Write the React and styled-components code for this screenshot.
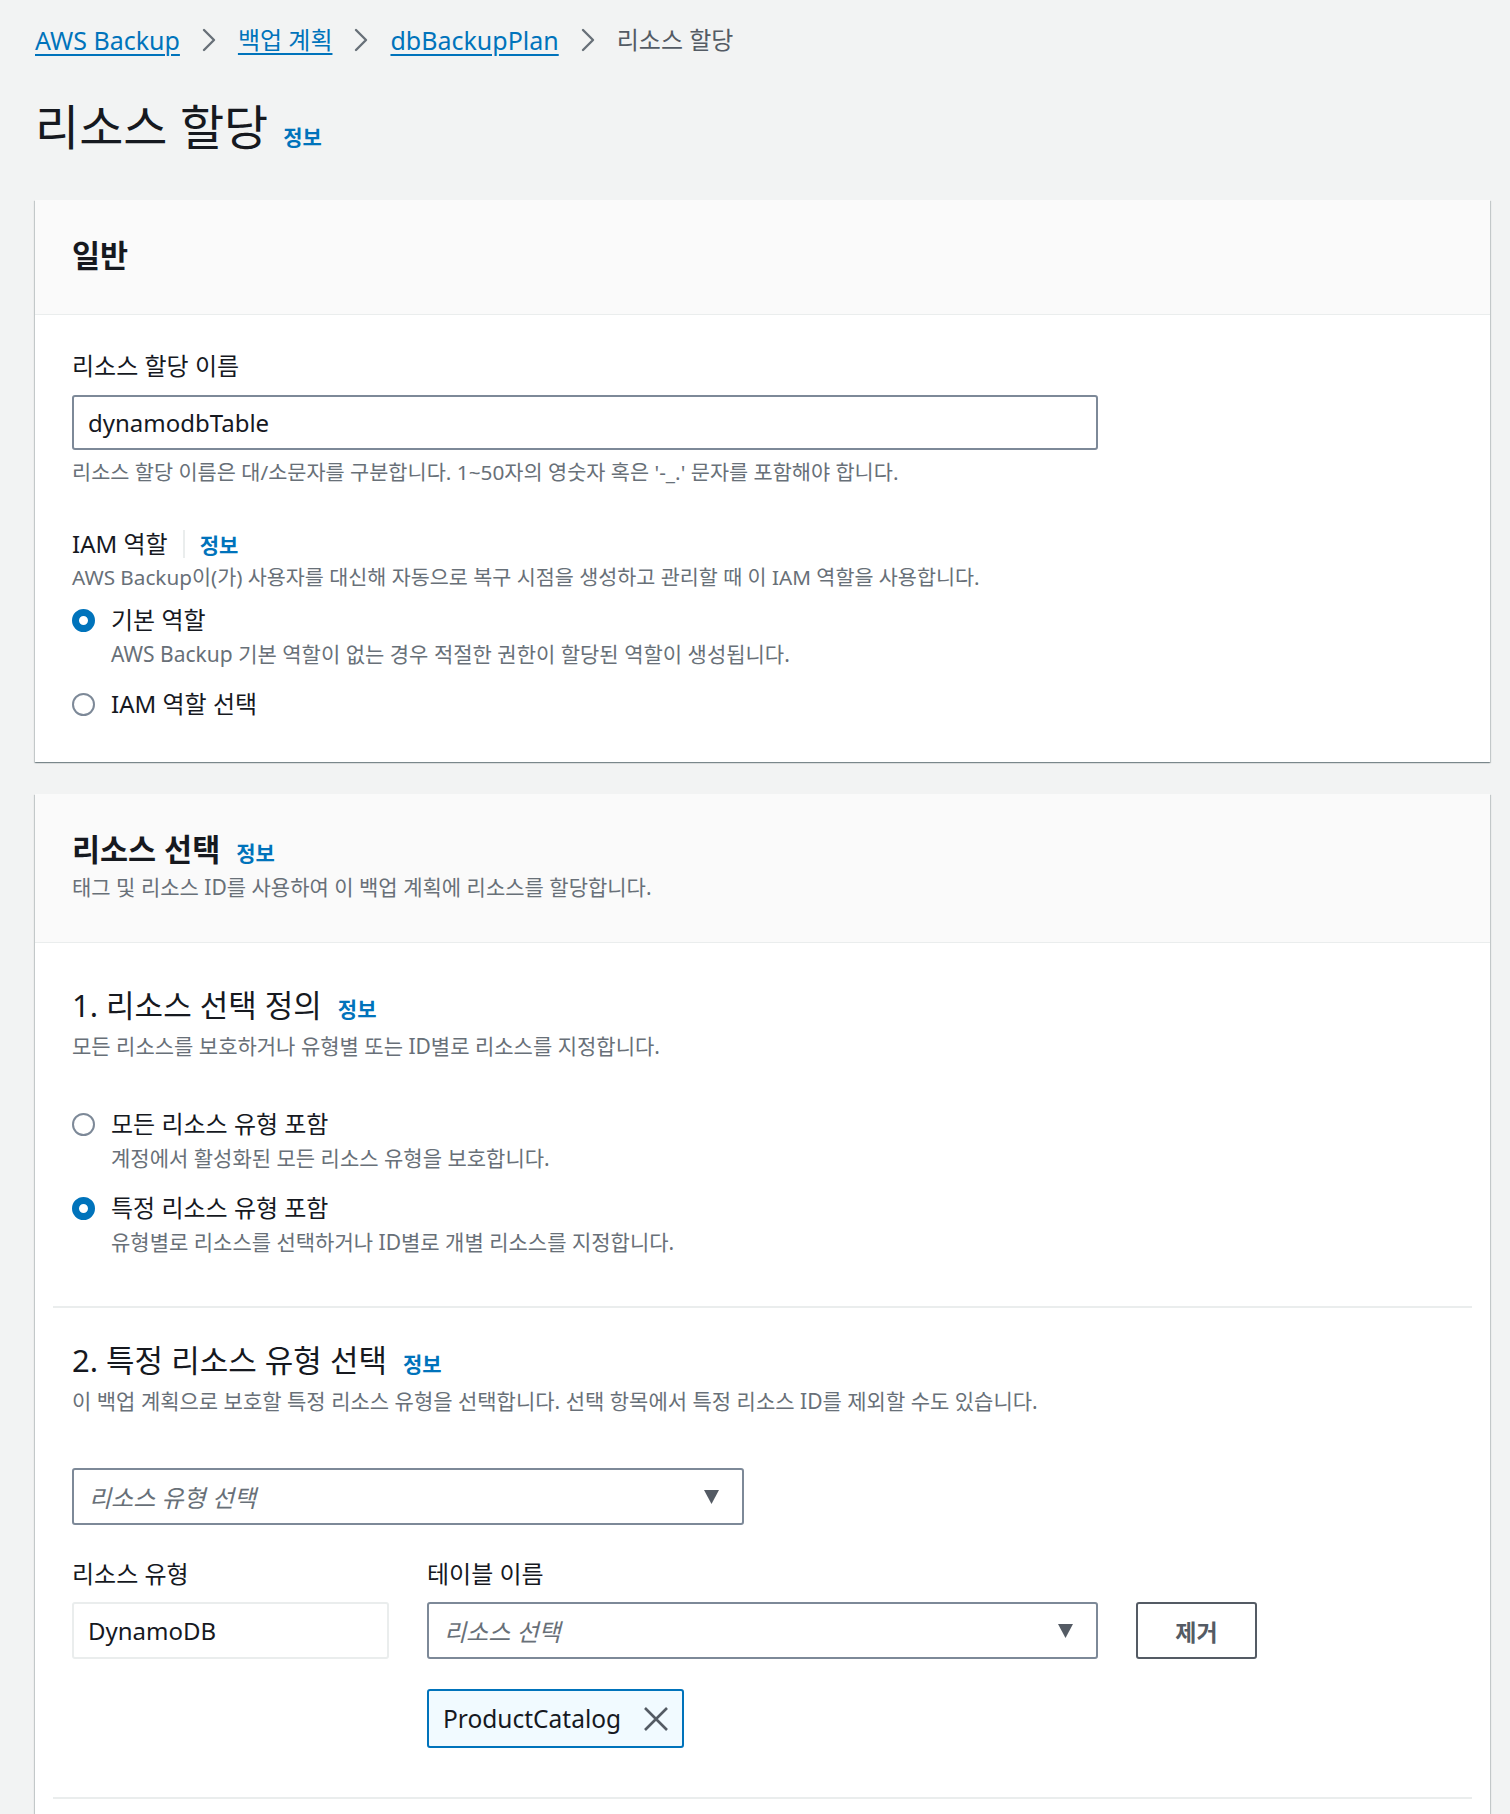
import React from "react";
import styled, { createGlobalStyle } from "styled-components";

const GlobalStyle = createGlobalStyle`
  body {
    margin: 0;
    background: #f2f3f3;
    font-family: "Noto Sans", "Noto Sans CJK KR", sans-serif;
    color: #16191f;
  }
  * {
    box-sizing: border-box;
  }
`;

function Chevron() {
  return (
    <svg width="14" height="24" viewBox="0 0 14 24">
      <polyline
        points="2,2 12,12 2,22"
        fill="none"
        stroke="#687078"
        strokeWidth="2.4"
        strokeLinecap="round"
        strokeLinejoin="round"
      />
    </svg>
  );
}

function Caret() {
  return (
    <svg width="15" height="14" viewBox="0 0 15 14">
      <polygon points="0,0 15,0 7.5,14" fill="#545b64" />
    </svg>
  );
}

function Close() {
  return (
    <svg width="26" height="26" viewBox="0 0 26 26">
      <path
        d="M2 2 L24 24 M24 2 L2 24"
        stroke="#545b64"
        strokeWidth="2.6"
        fill="none"
      />
    </svg>
  );
}

function RadioOption({ checked, label, desc }) {
  return (
    <StyledOption>
      <StyledRadio $checked={checked} />
      <StyledRadioLabel>{label}</StyledRadioLabel>
      {desc && <StyledRadioDesc>{desc}</StyledRadioDesc>}
    </StyledOption>
  );
}

function App() {
  return (
    <>
      <GlobalStyle />
      <StyledPage>
        <StyledBreadcrumbs>
          <StyledCrumb href="#" $en>
            AWS Backup
          </StyledCrumb>
          <Chevron />
          <StyledCrumb href="#">백업 계획</StyledCrumb>
          <Chevron />
          <StyledCrumb href="#" $en>
            dbBackupPlan
          </StyledCrumb>
          <Chevron />
          <StyledCurrent>리소스 할당</StyledCurrent>
        </StyledBreadcrumbs>

        <StyledTitleRow>
          <StyledTitle>리소스 할당</StyledTitle>
          <StyledInfo href="#">정보</StyledInfo>
        </StyledTitleRow>

        <StyledCard>
          <StyledCardHeader>
            <StyledHeading>일반</StyledHeading>
          </StyledCardHeader>
          <StyledCardBody>
            <StyledLabel>리소스 할당 이름</StyledLabel>
            <StyledInput type="text" value="dynamodbTable" readOnly />
            <StyledHelp>
              리소스 할당 이름은 대/소문자를 구분합니다. 1~50자의 영숫자 혹은
              '-_.' 문자를 포함해야 합니다.
            </StyledHelp>

            <StyledLabelRow>
              <StyledLabel>IAM 역할</StyledLabel>
              <StyledSep />
              <StyledInfo href="#">정보</StyledInfo>
            </StyledLabelRow>
            <StyledDesc>
              AWS Backup이(가) 사용자를 대신해 자동으로 복구 시점을 생성하고
              관리할 때 이 IAM 역할을 사용합니다.
            </StyledDesc>
            <StyledRadioGroup $top={13}>
              <RadioOption
                checked
                label="기본 역할"
                desc="AWS Backup 기본 역할이 없는 경우 적절한 권한이 할당된 역할이 생성됩니다."
              />
              <RadioOption label="IAM 역할 선택" />
            </StyledRadioGroup>
          </StyledCardBody>
        </StyledCard>

        <StyledCard $gap={32}>
          <StyledCardHeader>
            <StyledHeadingRow>
              <StyledHeading>리소스 선택</StyledHeading>
              <StyledInfo href="#">정보</StyledInfo>
            </StyledHeadingRow>
            <StyledHeaderDesc>
              태그 및 리소스 ID를 사용하여 이 백업 계획에 리소스를 할당합니다.
            </StyledHeaderDesc>
          </StyledCardHeader>
          <StyledCardBody $top={43}>
            <StyledHeadingRow>
              <StyledStepTitle>1. 리소스 선택 정의</StyledStepTitle>
              <StyledInfo href="#">정보</StyledInfo>
            </StyledHeadingRow>
            <StyledStepDesc>
              모든 리소스를 보호하거나 유형별 또는 ID별로 리소스를 지정합니다.
            </StyledStepDesc>
            <StyledRadioGroup $top={48}>
              <RadioOption
                label="모든 리소스 유형 포함"
                desc="계정에서 활성화된 모든 리소스 유형을 보호합니다."
              />
              <RadioOption
                checked
                label="특정 리소스 유형 포함"
                desc="유형별로 리소스를 선택하거나 ID별로 개별 리소스를 지정합니다."
              />
            </StyledRadioGroup>

            <StyledDivider $top={50} />

            <StyledHeadingRow $top={33}>
              <StyledStepTitle>2. 특정 리소스 유형 선택</StyledStepTitle>
              <StyledInfo href="#">정보</StyledInfo>
            </StyledHeadingRow>
            <StyledStepDesc>
              이 백업 계획으로 보호할 특정 리소스 유형을 선택합니다. 선택
              항목에서 특정 리소스 ID를 제외할 수도 있습니다.
            </StyledStepDesc>

            <StyledSelect $width={672} $top={53}>
              <StyledPlaceholder>리소스 유형 선택</StyledPlaceholder>
              <Caret />
            </StyledSelect>

            <StyledResourceGrid>
              <StyledLabel>리소스 유형</StyledLabel>
              <StyledLabel>테이블 이름</StyledLabel>
              <span />
              <StyledStatic>DynamoDB</StyledStatic>
              <StyledSelect>
                <StyledPlaceholder>리소스 선택</StyledPlaceholder>
                <Caret />
              </StyledSelect>
              <StyledButton type="button">제거</StyledButton>
              <span />
              <StyledTokenCell>
                <StyledToken>
                  ProductCatalog
                  <Close />
                </StyledToken>
              </StyledTokenCell>
            </StyledResourceGrid>

            <StyledDivider $top={49} />
          </StyledCardBody>
        </StyledCard>
      </StyledPage>
    </>
  );
}

export default App;

const StyledPage = styled.div`
  display: flex;
  flex-direction: column;
  padding: 24px 20px 0 35px;
`;

const StyledBreadcrumbs = styled.nav`
  display: flex;
  align-items: center;
  gap: 22px;
  height: 32px;
  font-size: 24px;
  line-height: 32px;
`;

const StyledCrumb = styled.a`
  color: #0073bb;
  font-size: ${({ $en }) => ($en ? "25px" : "24px")};
  text-decoration: underline;
  text-underline-offset: 4px;
  text-decoration-thickness: 2px;
`;

const StyledCurrent = styled.span`
  color: #545b64;
`;

const StyledTitleRow = styled.div`
  display: flex;
  align-items: baseline;
  gap: 15px;
  margin-top: 43px;
`;

const StyledTitle = styled.h1`
  margin: 0;
  font-size: 48px;
  font-weight: 400;
  line-height: 56px;
`;

const StyledInfo = styled.a`
  color: #0073bb;
  font-size: 21px;
  font-weight: 700;
  text-decoration: none;
`;

const StyledCard = styled.section`
  margin-top: ${({ $gap }) => $gap || 45}px;
  background: #ffffff;
  box-shadow: 0 1px 1px 0 rgba(0, 28, 36, 0.3),
    1px 1px 1px 0 rgba(0, 28, 36, 0.15), -1px 1px 1px 0 rgba(0, 28, 36, 0.15);
`;

const StyledCardHeader = styled.div`
  padding: 37px 37px 41px;
  background: #fafafa;
  border-bottom: 1px solid #eaeded;
`;

const StyledHeadingRow = styled.div`
  display: flex;
  align-items: baseline;
  gap: 16px;
  margin-top: ${({ $top }) => $top || 0}px;
`;

const StyledHeading = styled.h2`
  margin: 0;
  font-size: 30.5px;
  font-weight: 700;
  line-height: 36px;
`;

const StyledHeaderDesc = styled.p`
  margin: 6px 0 0;
  font-size: 21px;
  line-height: 28px;
  color: #687078;
`;

const StyledCardBody = styled.div`
  padding: ${({ $top }) => $top || 36}px 37px 42px;
`;

const StyledLabelRow = styled.div`
  display: flex;
  align-items: center;
  gap: 15px;
  margin-top: 43px;
`;

const StyledSep = styled.span`
  width: 2px;
  height: 28px;
  background: #eaeded;
`;

const StyledLabel = styled.div`
  font-size: 24px;
  line-height: 30px;
  color: #16191f;
`;

const StyledInput = styled.input`
  display: block;
  width: 1026px;
  height: 55px;
  margin-top: 14px;
  padding: 0 14px;
  border: 2px solid #7d8998;
  border-radius: 3px;
  font-family: inherit;
  font-size: 24px;
  color: #16191f;
  background: #ffffff;
  &:focus {
    outline: none;
  }
`;

const StyledHelp = styled.p`
  margin: 8px 0 0;
  font-size: 20.8px;
  line-height: 28px;
  color: #687078;
`;

const StyledDesc = styled.p`
  margin: 4px 0 0;
  font-size: 20.7px;
  line-height: 28px;
  color: #687078;
`;

const StyledRadioGroup = styled.div`
  display: flex;
  flex-direction: column;
  gap: 20px;
  margin-top: ${({ $top }) => $top}px;
`;

const StyledOption = styled.div`
  display: grid;
  grid-template-columns: 23px 1fr;
  column-gap: 16px;
  row-gap: 4px;
`;

const StyledRadio = styled.span`
  width: 23px;
  height: 23px;
  margin-top: 4.5px;
  border-radius: 50%;
  background: #ffffff;
  border: ${({ $checked }) =>
    $checked ? "7px solid #0073bb" : "2px solid #7d8998"};
`;

const StyledRadioLabel = styled.span`
  font-size: 24px;
  line-height: 32px;
`;

const StyledRadioDesc = styled.span`
  grid-column: 2;
  font-size: 21px;
  line-height: 28px;
  color: #687078;
`;

const StyledStepTitle = styled.h3`
  margin: 0;
  font-size: 31px;
  font-weight: 400;
  line-height: 38px;
`;

const StyledStepDesc = styled.p`
  margin: 8px 0 0;
  font-size: 21px;
  line-height: 28px;
  color: #687078;
`;

const StyledDivider = styled.hr`
  margin: ${({ $top }) => $top}px -19px 0;
  border: none;
  height: 2px;
  background: #eaeded;
`;

const StyledSelect = styled.div`
  display: flex;
  align-items: center;
  justify-content: space-between;
  width: ${({ $width }) => ($width ? `${$width}px` : "100%")};
  height: 57px;
  margin-top: ${({ $top }) => $top || 0}px;
  padding: 0 23px 0 15px;
  border: 2px solid #7d8998;
  border-radius: 3px;
  background: #ffffff;
`;

const StyledPlaceholder = styled.span`
  font-size: 24px;
  font-style: italic;
  color: #687078;
`;

const StyledResourceGrid = styled.div`
  display: grid;
  grid-template-columns: 317px 671px 121px;
  column-gap: 38px;
  margin-top: 34px;
  & > :nth-child(-n + 3) {
    margin-bottom: 13px;
  }
`;

const StyledStatic = styled.div`
  display: flex;
  align-items: center;
  height: 57px;
  padding: 0 14px;
  border: 2px solid #eaeded;
  border-radius: 3px;
  font-size: 24px;
`;

const StyledButton = styled.button`
  height: 57px;
  border: 2px solid #545b64;
  border-radius: 3px;
  background: #ffffff;
  font-family: inherit;
  font-size: 23px;
  font-weight: 700;
  color: #545b64;
  cursor: pointer;
`;

const StyledTokenCell = styled.div`
  margin-top: 30px;
`;

const StyledToken = styled.div`
  display: inline-flex;
  align-items: center;
  gap: 22px;
  height: 59px;
  padding: 0 13px 0 14px;
  border: 2px solid #0073bb;
  border-radius: 3px;
  background: #f1faff;
  font-size: 24.5px;
  color: #16191f;
`;
